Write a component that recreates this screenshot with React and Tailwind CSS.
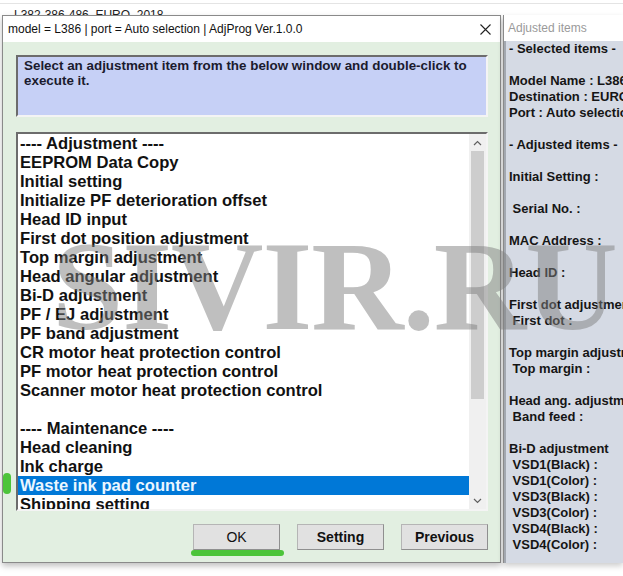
import React from "react";

const items = [
  "---- Adjustment ----",
  "EEPROM Data Copy",
  "Initial setting",
  "Initialize PF deterioration offset",
  "Head ID input",
  "First dot position adjustment",
  "Top margin adjustment",
  "Head angular adjustment",
  "Bi-D adjustment",
  "PF / EJ adjustment",
  "PF band adjustment",
  "CR motor heat protection control",
  "PF motor heat protection control",
  "Scanner motor heat protection control",
  "",
  "---- Maintenance ----",
  "Head cleaning",
  "Ink charge",
  "Waste ink pad counter",
  "Shipping setting",
];

const adjusted = [
  "- Selected items -",
  "",
  "Model Name : L386",
  "Destination : EURO",
  "Port : Auto selection",
  "",
  "- Adjusted items -",
  "",
  "Initial Setting :",
  "",
  " Serial No. :",
  "",
  "MAC Address :",
  "",
  "Head ID :",
  "",
  "First dot adjustment",
  " First dot :",
  "",
  "Top margin adjustment",
  " Top margin :",
  "",
  "Head ang. adjustment",
  " Band feed :",
  "",
  "Bi-D adjustment",
  " VSD1(Black) :",
  " VSD1(Color) :",
  " VSD3(Black) :",
  " VSD3(Color) :",
  " VSD4(Black) :",
  " VSD4(Color) :",
];

const arial = { fontFamily: "'Liberation Sans', Arial, sans-serif" };

function Chevron({ down }) {
  return (
    <svg width="9" height="6" viewBox="0 0 9 6" className="text-[#606060]">
      <path
        d={down ? "M1 1 L4.5 4.5 L8 1" : "M1 5 L4.5 1.5 L8 5"}
        fill="none"
        stroke="currentColor"
        strokeWidth="1.2"
      />
    </svg>
  );
}

function WinButton({ children, bold }) {
  return (
    <button
      className={`h-[26px] w-[87px] bg-[#e1e1e1] border border-[#b5b5b5] border-r-[#8f8f8f] border-b-[#8f8f8f] text-[14px] text-[#111] ${
        bold ? "font-bold" : "font-normal"
      }`}
      style={arial}
    >
      {children}
    </button>
  );
}

export default function App() {
  return (
    <div className="relative w-[623px] h-[576px] overflow-hidden bg-white">
      {/* desktop strip behind the windows */}
      <div className="h-[12px] mt-[3px] overflow-hidden border-t border-[#e4e4e4]">
        <div
          className="pl-[14px] text-[12px] leading-[16px] text-[#222] pt-[3px]"
          style={arial}
        >
          L382-386-486_EURO_2018
        </div>
      </div>

      <div className="flex">
        {/* main dialog */}
        <div className="ml-[2px] w-[499px] shrink-0 h-[548px] flex flex-col border border-[#8a8a8a] shadow-[0_3px_6px_rgba(0,0,0,0.25)] bg-[#e2efe1]">
          <div className="h-[26px] bg-white flex items-center justify-between pl-[5px] pr-[9px]">
            <span className="text-[12px] text-[#111]" style={arial}>
              model = L386 | port = Auto selection | AdjProg Ver.1.0.0
            </span>
            <svg width="11" height="11" viewBox="0 0 11 11">
              <path d="M0.5 0.5 L10.5 10.5 M10.5 0.5 L0.5 10.5" stroke="#222" strokeWidth="1.1" />
            </svg>
          </div>

          <div className="pl-[13px] pr-[12px] pt-[13px]">
            <div
              className="h-[62px] bg-[#c6d0f6] border-2 border-t-[#6c6c6c] border-l-[#6c6c6c] border-r-[#f4f4f4] border-b-[#f4f4f4] px-[6px] pt-[1px] text-[13.4px] leading-[15px] font-bold text-[#1b1b2e]"
              style={arial}
            >
              Select an adjustment item from the below window and double-click to
              execute it.
            </div>

            <div className="mt-[15px] h-[379px] bg-white border-2 border-t-[#6c6c6c] border-l-[#6c6c6c] border-r-[#f4f4f4] border-b-[#f4f4f4] flex overflow-hidden">
              <div className="flex-1 overflow-hidden" style={arial}>
                {items.map((t, i) => (
                  <div
                    key={i}
                    className={`h-[19px] leading-[19px] pl-[2px] text-[16.6px] font-bold whitespace-pre ${
                      t === "Waste ink pad counter"
                        ? "bg-[#0078d7] text-[#eaf6ff]"
                        : "text-[#111]"
                    }`}
                  >
                    {t || " "}
                  </div>
                ))}
              </div>
              <div className="w-[17px] bg-[#f0f0f0] flex flex-col items-center">
                <div className="h-[17px] flex items-center justify-center">
                  <Chevron />
                </div>
                <div className="w-[13px] h-[248px] bg-[#cdcdcd]" />
                <div className="flex-1" />
                <div className="h-[17px] flex items-center justify-center">
                  <Chevron down />
                </div>
              </div>
            </div>
          </div>

          <div className="flex justify-end gap-[17px] pr-[12px] mt-[13px]">
            <WinButton>OK</WinButton>
            <WinButton bold>Setting</WinButton>
            <WinButton bold>Previous</WinButton>
          </div>
        </div>

        {/* adjusted items window */}
        <div className="ml-[2px] min-w-0 flex-1 h-[548px] flex flex-col border-l border-[#8a8a8a] shadow-[0_3px_6px_rgba(0,0,0,0.2)]">
          <div className="h-[26px] bg-white flex items-center pl-[4px]">
            <span className="text-[12px] text-[#9a9a9a]" style={arial}>
              Adjusted items
            </span>
          </div>
          <div
            className="flex-1 bg-[#d5dae4] border-l-2 border-[#a3a8b0] pl-[3px] overflow-hidden"
            style={arial}
          >
            {adjusted.map((t, i) => (
              <div
                key={i}
                className="h-[16px] leading-[16px] text-[13px] font-bold text-[#151515] whitespace-pre"
              >
                {t || " "}
              </div>
            ))}
          </div>
        </div>
      </div>

      {/* watermark */}
      <div
        className="absolute left-[52px] top-[222px] text-[128px] leading-[128px] font-bold tracking-[-1px] text-[rgba(128,128,128,0.5)] pointer-events-none whitespace-nowrap"
        style={{ fontFamily: "'Liberation Serif', 'Times New Roman', serif" }}
      >
        SIVIR.RU
      </div>

      {/* green annotation marks */}
      <div className="absolute left-[3px] top-[473px] w-[8px] h-[21px] rounded-full bg-[#4cc43a]" />
      <div className="absolute left-[191px] top-[550px] w-[93px] h-[6px] rounded-full bg-[#4cc43a]" />
    </div>
  );
}
